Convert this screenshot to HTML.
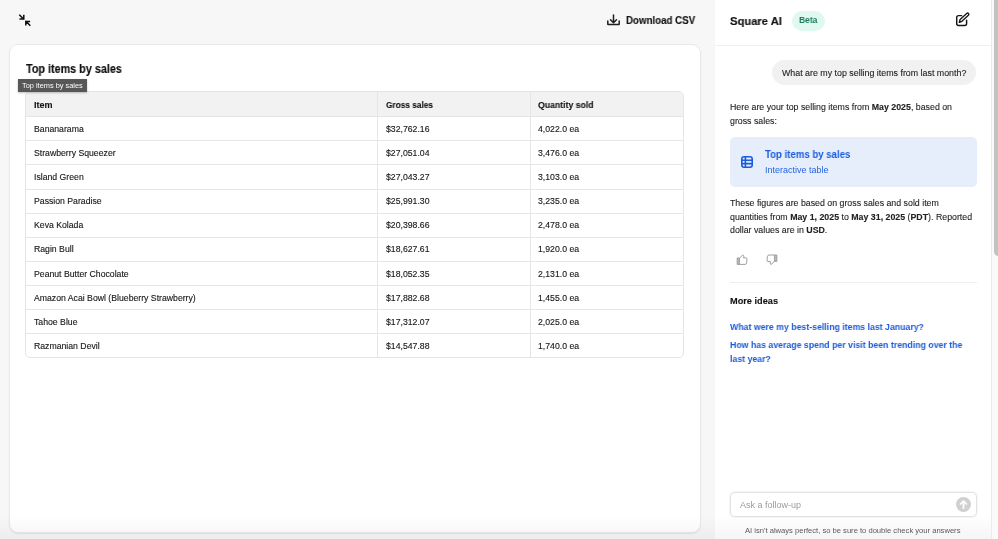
<!DOCTYPE html>
<html><head><meta charset="utf-8">
<style>
*{box-sizing:border-box;margin:0;padding:0}
html,body{width:998px;height:539px;overflow:hidden;background:#f7f7f7;font-family:"Liberation Sans",sans-serif;color:#1a1a1a}
.a{position:absolute;white-space:nowrap;will-change:transform}
.sx{transform-origin:0 50%}
#dltext{left:625.7px;top:13px;font-size:10.5px;font-weight:bold;line-height:14px;color:#151515;-webkit-text-stroke:0.15px #151515;transform:scaleX(0.925)}
#card{left:9px;top:44px;width:692px;height:489px;background:#fff;border:1px solid #e9e9e9;border-radius:9px;box-shadow:0 1px 1.5px rgba(0,0,0,.08)}
#title{left:25.6px;top:61px;font-size:12px;font-weight:bold;line-height:16px;color:#111;-webkit-text-stroke:0.15px #111;transform:scaleX(0.9)}
#tip{left:18px;top:79px;width:69px;height:13px;background:#575757;box-shadow:0 1px 2px rgba(0,0,0,.25)}
#tiptext{left:22px;top:79px;color:#fff;font-size:7.4px;line-height:13px}
#tbl{left:25px;top:91px;width:659px;height:267px;border:1px solid #e5e5e5;border-radius:5px;overflow:hidden;background:#fff}
#thead{left:0;top:0;width:657px;height:25px;background:#f2f2f2;border-bottom:1px solid #e5e5e5}
.rl{left:0;width:657px;height:1px;background:#e6e6e6}
.cl{top:0;width:1px;height:265px;background:#e6e6e6}
.th{font-size:9px;font-weight:bold;line-height:12px;color:#111;-webkit-text-stroke:0.1px #111}
.td{font-size:8.7px;line-height:12px;color:#151515;-webkit-text-stroke:0.12px #151515}
#panel{left:715px;top:0;width:276px;height:539px;background:#fff}
#phead{left:715px;top:45px;width:276px;height:1px;background:#efefef}
#sq{left:730px;top:13.7px;font-size:11.5px;font-weight:bold;line-height:15px;color:#111;-webkit-text-stroke:0.15px #111;transform:scaleX(0.975)}
#beta{left:792px;top:10.5px;width:33px;height:20px;border-radius:10px;background:#dff8f0}
#betatext{left:799px;top:13.8px;font-size:9.5px;font-weight:bold;line-height:12px;color:#1b7b57;transform:scaleX(0.89);transform-origin:0 50%}
#bubble{left:772px;top:60px;width:204.2px;height:24.5px;border-radius:12.5px;background:#f1f1f1}
#bubtext{left:782px;top:67px;font-size:8.85px;line-height:12px;color:#1c1c1c;-webkit-text-stroke:0.1px #1c1c1c}
.pt{font-size:8.8px;line-height:13.7px;color:#222;-webkit-text-stroke:0.1px #222}
#resp{left:730px;top:100.5px}
#bcard{left:730px;top:137px;width:247px;height:49.5px;border-radius:5px;background:#e6eefc}
#btitle{left:765px;top:148px;font-size:10.3px;font-weight:bold;line-height:14px;color:#1a5be0;transform:scaleX(0.934)}
#bsub{left:765px;top:164px;font-size:9px;line-height:12px;color:#2565e0}
#fig{left:730px;top:197px}
#hr{left:730px;top:282px;width:247px;height:1px;background:#eeeeee}
#more{left:730px;top:295px;font-size:9.2px;font-weight:bold;line-height:12px;color:#111;-webkit-text-stroke:0.1px #111}
.lk{font-size:9.2px;font-weight:bold;line-height:13.5px;color:#1c5adb;transform:scaleX(0.952)}
#l1{left:730px;top:320.5px}
#l2{left:730px;top:339.2px}
#inp{left:730px;top:492.3px;width:246.5px;height:24.5px;border:1px solid #e3e3e3;border-radius:5px;background:#fff;box-shadow:0 0 1px 0.5px rgba(0,0,0,0.04)}
#ph{left:740px;top:498.5px;font-size:9px;line-height:12px;color:#9b9b9b}
#send{left:956.5px;top:497px;width:15px;height:15px;border-radius:50%;background:#d0d0d0}
#foot{left:745px;top:524.7px;font-size:7.6px;line-height:12px;color:#5c5c5c}
#fade{left:0;top:515px;width:998px;height:24px;background:linear-gradient(rgba(0,0,0,0),rgba(0,0,0,0.04))}
#sbtrack{left:991px;top:0;width:7px;height:539px;background:#fafafa;border-left:1px solid #ebebeb}
#sbthumb{left:993.5px;top:-20px;width:9px;height:276px;background:#c2c2c2;border-radius:4.5px}
</style></head>
<body>
<svg class="a" style="left:10px;top:5px" width="30" height="30" viewBox="0 0 30 30" fill="none" stroke="#111" stroke-width="1.5" stroke-linecap="square" stroke-linejoin="miter">
<path d="M9.8 10.2 L13.6 14 M13.8 10.6 V14 H10.2"/>
<path d="M19.8 20.2 L16 16.4 M15.8 19.8 V16.4 H19.4"/>
</svg>
<svg class="a" style="left:600px;top:5px" width="30" height="30" viewBox="0 0 30 30" fill="none" stroke="#1f1f1f" stroke-width="1.5" stroke-linecap="round" stroke-linejoin="round">
<path d="M13.5 10 V17.5 M10.5 14.8 L13.5 17.8 L16.5 14.8"/>
<path d="M7.8 16 V19.2 Q7.8 19.6 8.2 19.6 H18.8 Q19.2 19.6 19.2 19.2 V16"/>
</svg>
<div class="a sx" id="dltext">Download CSV</div>

<div class="a" id="card"></div>
<div class="a sx" id="title">Top items by sales</div>
<div class="a" id="tbl">
 <div class="a" id="thead"></div>
 <div class="a rl" style="top:48px"></div>
 <div class="a rl" style="top:72px"></div>
 <div class="a rl" style="top:97px"></div>
 <div class="a rl" style="top:121px"></div>
 <div class="a rl" style="top:145px"></div>
 <div class="a rl" style="top:169px"></div>
 <div class="a rl" style="top:193px"></div>
 <div class="a rl" style="top:217px"></div>
 <div class="a rl" style="top:241px"></div>
 <div class="a cl" style="left:351px"></div>
 <div class="a cl" style="left:504px"></div>
</div>
<div class="a th" style="left:33.5px;top:98.5px">Item</div>
<div class="a th sx" style="left:385.5px;top:98.5px;transform:scaleX(0.92)">Gross sales</div>
<div class="a th sx" style="left:537.5px;top:98.5px;transform:scaleX(0.967)">Quantity sold</div>
<div class="a td" style="left:33.5px;top:122.5px">Bananarama</div><div class="a td" style="left:385.5px;top:122.5px">$32,762.16</div><div class="a td" style="left:537.5px;top:122.5px">4,022.0 ea</div>
<div class="a td" style="left:33.5px;top:146.5px">Strawberry Squeezer</div><div class="a td" style="left:385.5px;top:146.5px">$27,051.04</div><div class="a td" style="left:537.5px;top:146.5px">3,476.0 ea</div>
<div class="a td" style="left:33.5px;top:170.5px">Island Green</div><div class="a td" style="left:385.5px;top:170.5px">$27,043.27</div><div class="a td" style="left:537.5px;top:170.5px">3,103.0 ea</div>
<div class="a td" style="left:33.5px;top:194.5px">Passion Paradise</div><div class="a td" style="left:385.5px;top:194.5px">$25,991.30</div><div class="a td" style="left:537.5px;top:194.5px">3,235.0 ea</div>
<div class="a td" style="left:33.5px;top:218.5px">Keva Kolada</div><div class="a td" style="left:385.5px;top:218.5px">$20,398.66</div><div class="a td" style="left:537.5px;top:218.5px">2,478.0 ea</div>
<div class="a td" style="left:33.5px;top:242.5px">Ragin Bull</div><div class="a td" style="left:385.5px;top:242.5px">$18,627.61</div><div class="a td" style="left:537.5px;top:242.5px">1,920.0 ea</div>
<div class="a td" style="left:33.5px;top:267.5px">Peanut Butter Chocolate</div><div class="a td" style="left:385.5px;top:267.5px">$18,052.35</div><div class="a td" style="left:537.5px;top:267.5px">2,131.0 ea</div>
<div class="a td" style="left:33.5px;top:291.5px">Amazon Acai Bowl (Blueberry Strawberry)</div><div class="a td" style="left:385.5px;top:291.5px">$17,882.68</div><div class="a td" style="left:537.5px;top:291.5px">1,455.0 ea</div>
<div class="a td" style="left:33.5px;top:315.5px">Tahoe Blue</div><div class="a td" style="left:385.5px;top:315.5px">$17,312.07</div><div class="a td" style="left:537.5px;top:315.5px">2,025.0 ea</div>
<div class="a td" style="left:33.5px;top:339.5px">Razmanian Devil</div><div class="a td" style="left:385.5px;top:339.5px">$14,547.88</div><div class="a td" style="left:537.5px;top:339.5px">1,740.0 ea</div>
<div class="a" id="tip"></div>
<div class="a" id="tiptext">Top items by sales</div>

<div class="a" id="panel"></div>
<div class="a" id="phead"></div>
<div class="a sx" id="sq">Square AI</div>
<div class="a" id="beta"></div>
<div class="a" id="betatext">Beta</div>
<svg class="a" style="left:948px;top:6px" width="30" height="28" viewBox="0 0 30 28" fill="none" stroke="#151515" stroke-width="1.45" stroke-linecap="round" stroke-linejoin="round">
<path d="M13.6 9.6 H10.6 Q8.7 9.6 8.7 11.5 V17.6 Q8.7 19.5 10.6 19.5 H16.7 Q18.6 19.5 18.6 17.6 V14.2"/>
<path d="M11.3 16.4 L12.1 13.5 L18.7 7.4 A1.25 1.25 0 0 1 20.4 9.3 L13.9 15.3 Z" stroke-width="1.35"/>
</svg>
<div class="a" id="bubble"></div>
<div class="a" id="bubtext">What are my top selling items from last month?</div>
<div class="a pt" id="resp">Here are your top selling items from <b>May 2025</b>, based on<br>gross sales:</div>
<div class="a" id="bcard"></div>
<svg class="a" style="left:741px;top:156px" width="12" height="12" viewBox="0 0 12 12" fill="none" stroke="#1a5be0" stroke-width="1.6">
<rect x="0.8" y="0.8" width="10.4" height="10.4" rx="2.2"/>
<path d="M0.7 4.3 H11.3 M0.7 7.6 H11.3 M4.4 0.7 V11.3"/>
</svg>
<div class="a sx" id="btitle">Top items by sales</div>
<div class="a" id="bsub">Interactive table</div>
<div class="a pt" id="fig">These figures are based on gross sales and sold item<br>quantities from <b>May 1, 2025</b> to <b>May 31, 2025</b> (<b>PDT</b>). Reported<br>dollar values are in <b>USD</b>.</div>
<svg class="a" style="left:736px;top:254px" width="12" height="12" viewBox="0 0 12 12" fill="none" stroke="#9a9a9a" stroke-width="0.95" stroke-linejoin="round">
<path d="M1.2 4 H3.4 V10.4 H1.2 Z" fill="#bdbdbd"/>
<path d="M3.4 4.6 L6.2 1.3 Q7.2 0.6 7.7 1.5 Q8 2.4 7.4 3.8 H10 Q11.2 4 11 5.2 L10.5 9.2 Q10.2 10.4 9 10.4 H3.4"/>
</svg>
<svg class="a" style="left:766px;top:254px" width="12" height="12" viewBox="0 0 12 12" fill="none" stroke="#9a9a9a" stroke-width="0.95" stroke-linejoin="round">
<path d="M10.8 7.4 H8.6 V1 H10.8 Z" fill="#bdbdbd"/>
<path d="M8.6 6.8 L5.8 10.1 Q4.8 10.8 4.3 9.9 Q4 9 4.6 7.6 H2 Q0.8 7.4 1 6.2 L1.5 2.2 Q1.8 1 3 1 H8.6"/>
</svg>
<div class="a" id="hr"></div>
<div class="a" id="more">More ideas</div>
<div class="a lk sx" id="l1">What were my best-selling items last January?</div>
<div class="a lk sx" id="l2">How has average spend per visit been trending over the<br>last year?</div>
<div class="a" id="inp"></div>
<div class="a" id="ph">Ask a follow-up</div>
<svg class="a" style="left:956.2px;top:496.8px" width="15" height="15" viewBox="0 0 15 15">
<circle cx="7.5" cy="7.5" r="7.5" fill="#d0d0d0"/>
<path d="M7.5 11.2 V4.2 M4.5 7 L7.5 4 L10.5 7" fill="none" stroke="#fff" stroke-width="1.75" stroke-linecap="round" stroke-linejoin="round"/>
</svg>
<div class="a" id="foot">AI isn't always perfect, so be sure to double check your answers</div>
<div class="a" id="fade"></div>
<div class="a" id="sbtrack"></div>
<div class="a" id="sbthumb"></div>
</body></html>
